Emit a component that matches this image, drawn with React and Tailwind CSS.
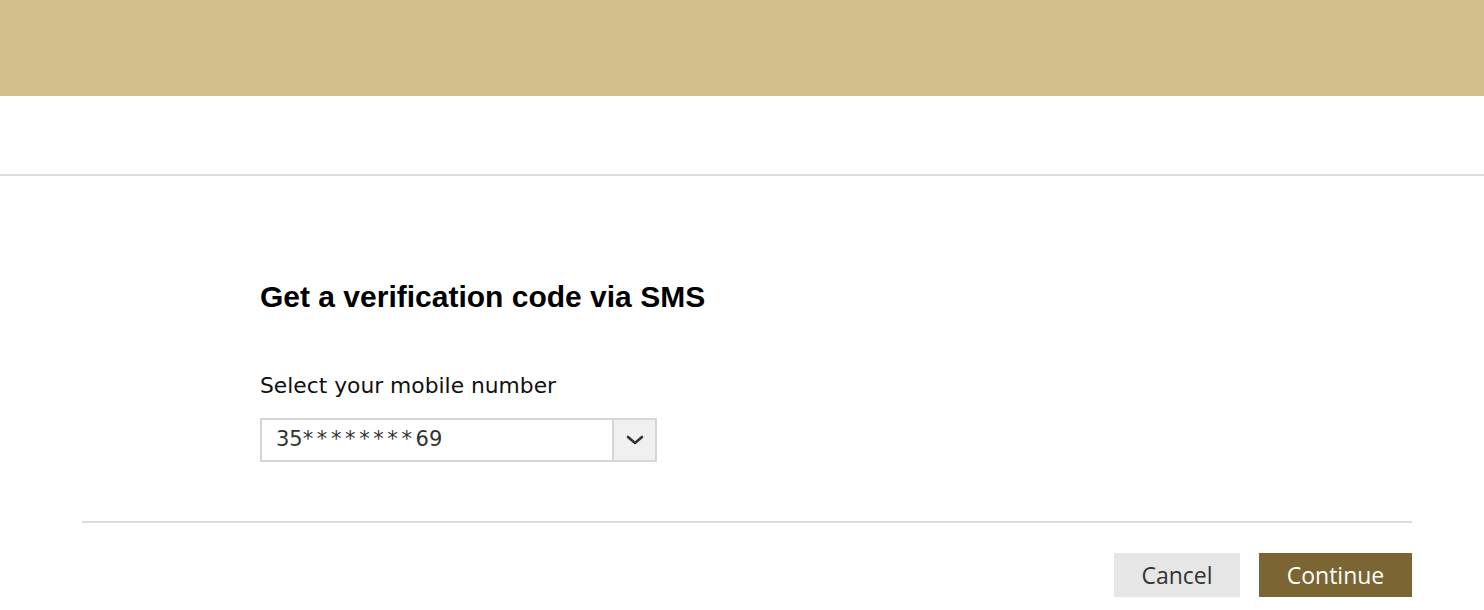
import React from 'react';

function App() {
  return (
    <div className="min-h-screen bg-white" style={{ fontFamily: '"DejaVu Sans", Verdana, sans-serif' }}>
      <header className="h-[96px] bg-[#d3bf8b]" />
      <div className="h-[78px]" />
      <div className="h-[2px] bg-[#dcdcdc]" />

      <main className="pl-[82px] pr-[72px]">
        <section className="pl-[178px] pt-[105px]">
          <h1 className="text-[30px] leading-[32px] font-bold text-black" style={{ fontFamily: '"Liberation Sans", Arial, sans-serif' }}>
            Get a verification code via SMS
          </h1>
          <label className="block mt-[60px] text-[21.8px] leading-[26px] text-[#111]">Select your mobile number</label>
          <div className="mt-[19px] flex w-[397px] h-[44px] border-2 border-[#d6d6d6]">
            <div className="flex-1 flex items-center pl-[14px] text-[21px] text-[#333]">
              35<span className="tracking-[3.6px]">********</span>69
            </div>
            <div className="w-[43px] flex items-center justify-center bg-[#f0f0f0] border-l-2 border-[#d6d6d6]">
              <svg width="18" height="12" viewBox="0 0 18 12" fill="none" stroke="#333" strokeWidth="2.6" strokeLinecap="round" strokeLinejoin="round">
                <path d="M2 3l7 6 7-6" />
              </svg>
            </div>
          </div>
        </section>

        <div className="mt-[59px] h-[2px] bg-[#dcdcdc]" />

        <div className="flex justify-end gap-[19px] pt-[30px]" style={{ fontFamily: '"Open Sans", sans-serif' }}>
          <button className="w-[126px] h-[44px] bg-[#e6e6e6] text-[#333] text-[23px]">Cancel</button>
          <button className="w-[153px] h-[44px] bg-[#7b6532] text-white text-[23px]">Continue</button>
        </div>
      </main>
    </div>
  );
}

export default App;
